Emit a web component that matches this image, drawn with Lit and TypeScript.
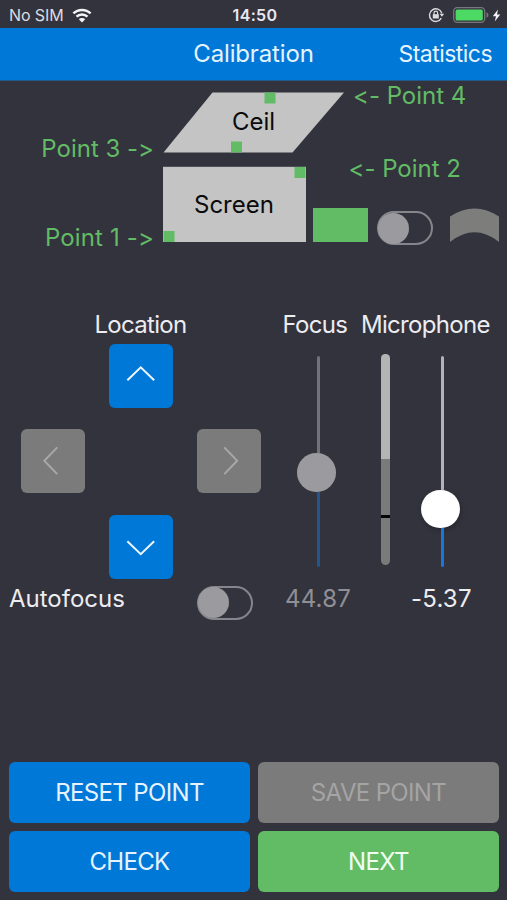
import { LitElement, html, css, svg } from "lit";
import { customElement, property } from "lit/decorators.js";
import { classMap } from "lit/directives/class-map.js";
import { styleMap } from "lit/directives/style-map.js";

const CHEVRONS: Record<string, string> = {
  up: "M18.5 36.5 L32 23.5 L45.500 36.5",
  down: "M18.5 26.500 L32 39.5 L45.500 26.5",
  left: "M36.500 18.500 L23.500 32 L36.500 45.500",
  right: "M27.500 18.500 L40.500 32 L27.500 45.500",
};

@customElement("toggle-switch")
export class ToggleSwitch extends LitElement {
  static styles = css`
    :host { display: block; flex: none; }
    .track {
      box-sizing: border-box;
      width: 56px;
      height: 34px;
      border: 2px solid #85858b;
      border-radius: 17px;
      display: flex;
      align-items: center;
    }
    .knob {
      width: 31px;
      height: 31px;
      margin-left: -1px;
      border-radius: 50%;
      background: #9b9b9f;
      flex: none;
    }
  `;
  render() {
    return html`<div class="track"><div class="knob"></div></div>`;
  }
}

@customElement("arrow-button")
export class ArrowButton extends LitElement {
  @property() direction = "up";
  @property({ type: Boolean }) disabled = false;
  static styles = css`
    :host { display: block; }
    .key {
      display: block;
      width: 63.5px;
      height: 63.5px;
      padding: 0;
      border: 0;
      border-radius: 6px;
      background: #0078d7;
      color: #eef6ff;
    }
    .off { background: #7b7b7b; color: #a8a8a8; }
    .glyph { display: block; width: 63.5px; height: 63.5px; }
  `;
  render() {
    return html`<button class=${classMap({ key: true, off: this.disabled })}>
      <svg class="glyph" viewBox="0 0 64 64" fill="none" stroke="currentColor" stroke-width="2">
        <path d=${CHEVRONS[this.direction]}></path>
      </svg>
    </button>`;
  }
}

@customElement("vertical-slider")
export class VerticalSlider extends LitElement {
  @property({ type: Number }) level = 0;
  @property({ type: Boolean }) disabled = false;
  static styles = css`
    :host { display: block; }
    .slider { display: flex; flex-direction: column; align-items: center; width: 39px; height: 211px; }
    .rest { width: 3px; flex: none; background: #b2b2b8; border-radius: 2px 2px 0 0; margin-left: 3px; }
    .thumb {
      width: 38.5px;
      height: 38.5px;
      flex: none;
      border-radius: 50%;
      background: #fff;
      box-shadow: 1px 2px 5px rgba(0, 0, 0, 0.28);
    }
    .fill { width: 3px; flex: 1; background: #1677e0; border-radius: 0 0 2px 2px; margin-left: 3px; }
    .off .rest { background: #727279; }
    .off .thumb { background: #9b9b9f; box-shadow: none; }
    .off .fill { background: #21568f; }
  `;
  render() {
    return html`<div class=${classMap({ slider: true, off: this.disabled })}>
      <div class="rest" style=${styleMap({ height: `${this.level}px` })}></div>
      <div class="thumb"></div>
      <div class="fill"></div>
    </div>`;
  }
}

@customElement("app-root")
export class AppRoot extends LitElement {
  static styles = css`
    :host {
      display: flex;
      flex-direction: column;
      box-sizing: border-box;
      width: 507px;
      height: 900px;
      overflow: hidden;
      background: #33333d;
      color: #ececf1;
      font: 400 24px/30px Inter, "Liberation Sans", sans-serif;
      font-feature-settings: "calt" 0, "liga" 0;
      white-space: nowrap;
    }
    .status {
      display: grid;
      grid-template-columns: 1fr auto 1fr;
      align-items: center;
      flex: none;
      height: 28px;
      padding: 2px 6px 0 9px;
      box-sizing: border-box;
      font-size: 16px;
      line-height: 20px;
      color: #dcdce0;
    }
    .carrier { display: flex; align-items: center; gap: 8px; letter-spacing: -0.1px; }
    .wifi { width: 20px; height: 15px; display: block; }
    .clock { font-weight: 600; letter-spacing: 0.35px; color: #e8e8ec; }
    .power { display: flex; align-items: center; justify-content: flex-end; }
    .lock { width: 17px; height: 16px; margin-right: 8px; }
    .battery { width: 36px; height: 16px; }
    .bolt { width: 9px; height: 13px; margin-left: 3px; }
    .nav {
      display: grid;
      grid-template-columns: 1fr auto 1fr;
      align-items: center;
      flex: none;
      height: 53px;
      padding: 0 15px;
      box-sizing: border-box;
      background: #0078d7;
      border-bottom: 1px solid #20598c;
      color: #e6f3ff;
    }
    .title { letter-spacing: -0.15px; }
    .link { justify-self: end; font-size: 23px; letter-spacing: -0.55px; }
    .ceiling { display: flex; flex: none; height: 85px; }
    .wall { display: flex; flex: none; height: 77px; }
    .left { width: 154px; flex: none; text-align: right; color: #62bb65; }
    .right { flex: 1; color: #62bb65; }
    .p3 { padding-top: 53px; }
    .p4 { padding: 0 0 0 8px; }
    .p1 { padding-top: 57px; letter-spacing: 0.15px; }
    .panel { display: grid; flex: none; margin-left: 9px; color: #0b0b0c; }
    .panel > * { grid-area: 1 / 1; }
    .ceil { width: 182px; height: 61px; margin-top: 11px; }
    .screen { width: 143px; height: 76px; }
    .shape { display: block; width: 100%; height: 100%; }
    .name { align-self: center; }
    .ceil .name { padding: 0 0 2px 69px; }
    .screen .name { padding: 1px 0 0 31px; }
    .p2 { padding-left: 42.5px; margin-top: -12px; height: 30px; }
    .samples { display: flex; margin: 24px 0 0 6.5px; }
    .flat { width: 55.5px; height: 34px; background: #62bb65; }
    .samples toggle-switch { margin: 3px 16.5px 0 9px; }
    .curve { width: 49px; height: 34px; display: block; }
    .controls {
      display: grid;
      grid-template-columns: 278px 78px 1fr;
      margin-top: 67px;
      flex: none;
    }
    .location { padding-left: 21px; }
    .heading { height: 30px; letter-spacing: -0.7px; }
    .location .heading { text-align: center; width: 239px; }
    .pad {
      display: grid;
      grid-template-columns: repeat(3, 63.5px);
      column-gap: 24.5px;
      row-gap: 22px;
      margin-top: 4px;
      width: 240px;
    }
    .up, .down { grid-column: 2; }
    .up { grid-row: 1; }
    .down { grid-row: 3; }
    .mid-left { grid-column: 1; grid-row: 2; margin-top: -0.5px; }
    .mid-right { grid-column: 3; grid-row: 2; margin-top: -0.5px; }
    .down { margin-top: 0.5px; }
    .focus .heading { padding-left: 4.5px; }
    .focus vertical-slider { margin: 16px 0 0 19px; }
    .mic .heading { padding-left: 5px; }
    .levels { display: flex; margin-left: 24.5px; }
    .meter {
      display: flex;
      flex-direction: column;
      width: 9.5px;
      height: 211px;
      margin: 14px 31px 0 0;
      border-radius: 5px;
      overflow: hidden;
      background: #787b78;
    }
    .quiet { background: #b3b5b2; }
    .mark { height: 2.5px; background: #050505; }
    .levels vertical-slider { margin-top: 16px; }
    .readings {
      display: grid;
      grid-template-columns: 197px 81px 78px 1fr;
      flex: none;
      height: 42px;
      margin-top: 5.5px;
    }
    .auto { padding-left: 9px; }
    .readings toggle-switch { margin-top: 1.5px; }
    .focus-value { color: #8f8f95; padding-left: 7px; letter-spacing: 0.2px; }
    .mic-value { padding-left: 55px; letter-spacing: 0.2px; }
    .actions {
      display: grid;
      grid-template-columns: 241px 241px;
      grid-auto-rows: 61px;
      gap: 8px;
      margin: auto 0 8px 9px;
    }
    .action {
      border: 0;
      padding: 1px 0 0;
      border-radius: 6px;
      background: #0078d7;
      color: #e6f3ff;
      font: inherit;
      letter-spacing: -0.65px;
    }
    .muted { background: #7b7b7b; color: #a4a4a4; }
    .go { background: #62bb65; color: #f0fff0; }
  `;

  private corner(x: number, y: number) {
    return svg`<rect x=${x} y=${y} width="11" height="11" fill="#62bb65"></rect>`;
  }

  render() {
    return html`
      <div class="status">
        <div class="carrier">
          <span>No SIM</span>
          <svg class="wifi" viewBox="0 0 20 15" fill="none" stroke="#f4f4f6" stroke-width="2.500">
            <path d="M1.400 5.400 A12.300 12.300 0 0 1 18.600 5.400"></path>
            <path d="M4.500 8.700 A7.900 7.900 0 0 1 15.500 8.700"></path>
            <path d="M10 14.500 L6.800 11.200 A4.600 4.600 0 0 1 13.200 11.200 Z" fill="#f4f4f6" stroke="none"></path>
          </svg>
        </div>
        <div class="clock">14:50</div>
        <div class="power">
          <svg class="lock" viewBox="0 0 17 16" fill="none" stroke="#dcdce0" stroke-width="1.400">
            <path d="M13.300 11.200 A6.300 6.300 0 1 1 13.800 6.200"></path>
            <path d="M11.600 6.700 H16.200 L13.900 9.700 Z" fill="#dcdce0" stroke="none"></path>
            <rect x="4.800" y="7.200" width="6" height="4.300" fill="#dcdce0" stroke="none"></rect>
            <path d="M6 7.500 V6 A1.800 1.800 0 0 1 9.600 6 V7.500" stroke-width="1.200"></path>
          </svg>
          <svg class="battery" viewBox="0 0 36 16">
            <rect x="0.700" y="0.700" width="31" height="14.600" rx="3.500" fill="none" stroke="#77777e" stroke-width="1.300"></rect>
            <rect x="2.600" y="2.600" width="27.200" height="10.800" rx="1.500" fill="#4cd964"></rect>
            <path d="M33.500 5.300 Q35.500 6 35.500 8 Q35.500 10 33.500 10.700 Z" fill="#77777e"></path>
          </svg>
          <svg class="bolt" viewBox="0 0 9 13"><path d="M6 0.500 L0.800 7.300 H4 L2.800 12.500 L8.200 5.500 H5 Z" fill="#f4f4f6"></path></svg>
        </div>
      </div>

      <div class="nav">
        <span></span>
        <span class="title">Calibration</span>
        <span class="link">Statistics</span>
      </div>

      <div class="ceiling">
        <div class="left p3">Point 3 -&gt;</div>
        <div class="panel ceil">
          <svg class="shape" viewBox="0 0 182 61">
            <path d="M49.500 0.500 H181 L129.500 60.500 H0.500 Z" fill="#c4c4c4"></path>
            ${this.corner(101.5, 0.5)}${this.corner(68, 49.5)}
          </svg>
          <span class="name">Ceil</span>
        </div>
        <div class="right p4">&lt;- Point 4</div>
      </div>

      <div class="wall">
        <div class="left p1">Point 1 -&gt;</div>
        <div class="panel screen">
          <svg class="shape" viewBox="0 0 143 76">
            <rect x="0" y="0.800" width="143" height="75.200" fill="#c4c4c4"></rect>
            ${this.corner(131.5, 1)}${this.corner(0.5, 65)}
          </svg>
          <span class="name">Screen</span>
        </div>
        <div class="right">
          <div class="p2">&lt;- Point 2</div>
          <div class="samples">
            <div class="flat"></div>
            <toggle-switch></toggle-switch>
            <svg class="curve" viewBox="0 0 49 34">
              <path d="M0 8.500 Q24.500 -7.500 49 8.500 V34 Q24.500 14.500 0 34 Z" fill="#7d7d7c"></path>
            </svg>
          </div>
        </div>
      </div>

      <div class="controls">
        <div class="location">
          <div class="heading">Location</div>
          <div class="pad">
            <arrow-button class="up" direction="up"></arrow-button>
            <arrow-button class="mid-left" direction="left" disabled></arrow-button>
            <arrow-button class="mid-right" direction="right" disabled></arrow-button>
            <arrow-button class="down" direction="down"></arrow-button>
          </div>
        </div>
        <div class="focus">
          <div class="heading">Focus</div>
          <vertical-slider level="97" disabled></vertical-slider>
        </div>
        <div class="mic">
          <div class="heading">Microphone</div>
          <div class="levels">
            <div class="meter">
              <div class="quiet" style=${styleMap({ height: "105px" })}></div>
              <div style=${styleMap({ height: "56px" })}></div>
              <div class="mark"></div>
            </div>
            <vertical-slider level="133.5"></vertical-slider>
          </div>
        </div>
      </div>

      <div class="readings">
        <span class="auto">Autofocus</span>
        <toggle-switch></toggle-switch>
        <span class="focus-value">44.87</span>
        <span class="mic-value">-5.37</span>
      </div>

      <div class="actions">
        <button class="action">RESET POINT</button>
        <button class="action muted">SAVE POINT</button>
        <button class="action">CHECK</button>
        <button class="action go">NEXT</button>
      </div>
    `;
  }
}
